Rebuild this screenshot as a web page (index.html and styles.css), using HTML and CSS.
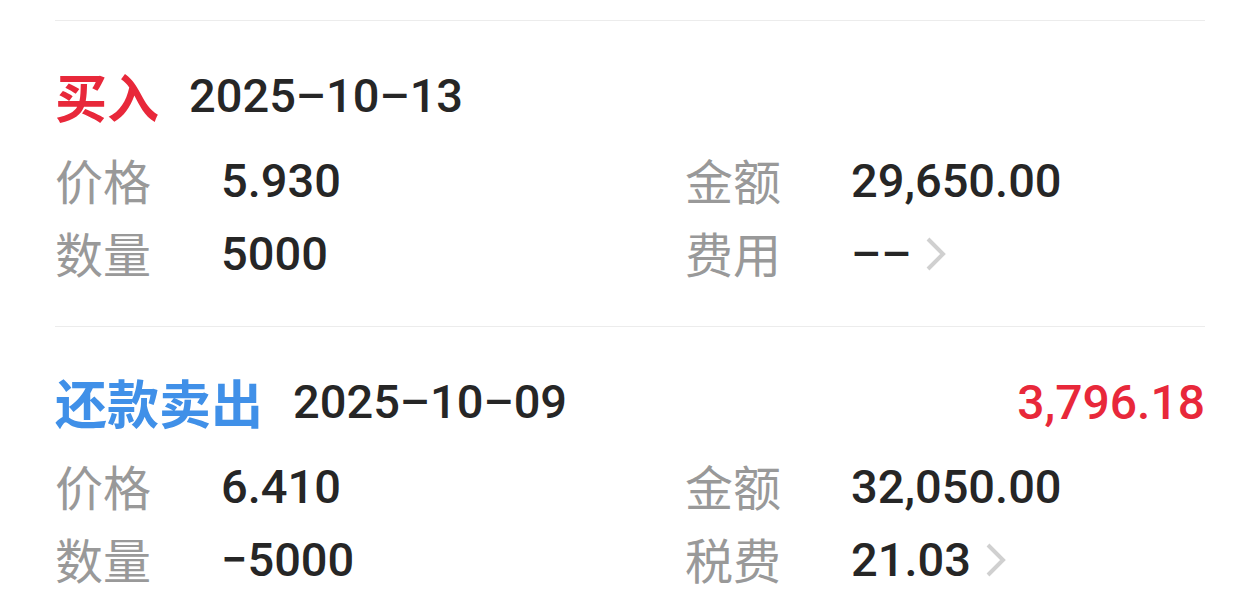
FILE: index.html
```html
<!DOCTYPE html>
<html lang="zh-CN">

<head>
    <meta charset="UTF-8">
    <meta name="viewport" content="width=device-width, initial-scale=1.0">
    <title>交易记录</title>
    <link rel="stylesheet" href="styles.css">
</head>

<body>

    <!-- Trade records -->
    <div class="trade-list">
        <div class="trade">
            <div class="trade-head">
                <span class="trade-type buy">买入</span>
                <span class="trade-date">2025–10–13</span>
            </div>
            <div class="trade-grid">
                <div class="field"><span class="label">价格</span><span class="value">5.930</span></div>
                <div class="field"><span class="label">金额</span><span class="value">29,650.00</span></div>
                <div class="field"><span class="label">数量</span><span class="value">5000</span></div>
                <div class="field">
                    <span class="label">费用</span><span class="value">––</span>
                    <svg class="chevron" viewBox="0 0 22 36"><polyline points="3,3 18,18 3,33" /></svg>
                </div>
            </div>
        </div>

        <div class="trade">
            <div class="trade-head">
                <span class="trade-type repay">还款卖出</span>
                <span class="trade-date">2025–10–09</span>
                <span class="trade-profit">3,796.18</span>
            </div>
            <div class="trade-grid">
                <div class="field"><span class="label">价格</span><span class="value">6.410</span></div>
                <div class="field"><span class="label">金额</span><span class="value">32,050.00</span></div>
                <div class="field"><span class="label">数量</span><span class="value">−5000</span></div>
                <div class="field">
                    <span class="label">税费</span><span class="value">21.03</span>
                    <svg class="chevron" viewBox="0 0 22 36"><polyline points="3,3 18,18 3,33" /></svg>
                </div>
            </div>
        </div>
    </div>

</body>

</html>
```

FILE: styles.css
```css
/* General Styles */
html,
body {
    margin: 0;
    background-color: #ffffff;
    font-family: Roboto, "Noto Sans CJK SC", sans-serif;
    color: #222222;
    overflow: hidden;
}

.trade-list {
    padding: 20px 55px 0 55px;
}

.trade {
    border-top: 1px solid #ececec;
    padding: 45px 0 36px 0;
}

.trade-head {
    display: flex;
    align-items: center;
    height: 60px;
}

.trade-type {
    font-family: "Noto Sans CJK SC", sans-serif;
    font-size: 52px;
    font-weight: 700;
    line-height: 60px;
}

.buy {
    color: #e8283a;
}

.repay {
    color: #4090e8;
}

.trade-date {
    margin-left: 30px;
    font-size: 47px;
    font-weight: 500;
    line-height: 60px;
    color: #262626;
}

.trade-profit {
    margin-left: auto;
    font-size: 48px;
    font-weight: 500;
    color: #e8283a;
}

.trade-grid {
    display: grid;
    grid-template-columns: 630px 1fr;
    margin-top: 18px;
}

.field {
    display: flex;
    align-items: center;
    height: 73px;
}

.label {
    width: 166px;
    font-family: "Noto Sans CJK SC", sans-serif;
    font-size: 48px;
    line-height: 60px;
    margin-top: -4px;
    color: #999999;
}

.value {
    font-size: 47px;
    font-weight: 500;
    color: #262626;
}

.chevron {
    width: 22px;
    height: 36px;
    margin-left: 14px;
    fill: none;
    stroke: #d0d0d0;
    stroke-width: 4;
}
```
